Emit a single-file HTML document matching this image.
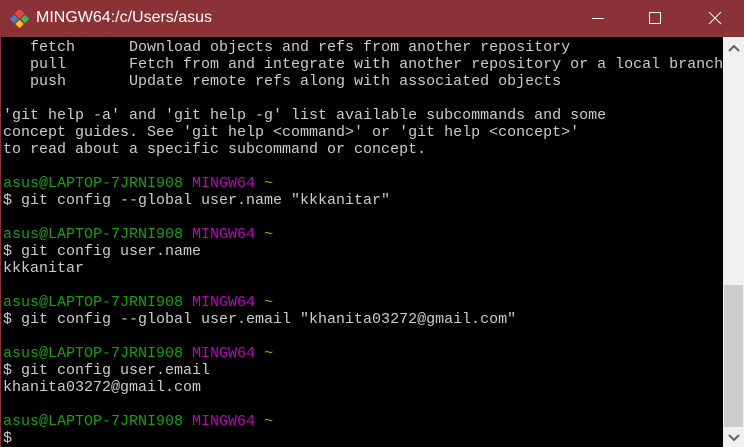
<!DOCTYPE html>
<html><head><style>
html,body{margin:0;padding:0;width:744px;height:447px;overflow:hidden;background:#000}
#t{position:absolute;left:0;top:0;width:744px;height:37px;background:#8b3236;color:#fff;font:15px "Liberation Sans",sans-serif}
#t .ttl{position:absolute;left:36px;top:9px;font-size:16px}
#term{position:absolute;left:0;top:37px;width:723px;height:410px;background:#000;border-left:1px solid #8b3236;box-sizing:border-box}
pre{margin:0;position:absolute;left:2px;top:2px;font:15px/17px "Liberation Mono",monospace;color:#cccccc;letter-spacing:0}
.g{color:#13a10e}.m{color:#c000c0}.y{color:#c19c00}
#sb{position:absolute;left:723px;top:37px;width:21px;height:410px;background:#f0f0f0}
#th{position:absolute;left:724px;top:285px;width:19px;height:142px;background:#cdcdcd}
</style></head><body>
<div id="t">
<svg style="position:absolute;left:10px;top:10px" width="20" height="18" viewBox="0 0 20 18">
<rect x="6" y="0" width="7" height="7" transform="rotate(45 9.5 3.5)" fill="#e24a3b"/>
<rect x="1" y="6" width="6" height="6" transform="rotate(45 4 9)" fill="#3d85d6"/>
<rect x="12" y="6" width="6" height="6" transform="rotate(45 15 9)" fill="#3cb54a"/>
<rect x="6.5" y="11" width="6" height="6" transform="rotate(45 9.5 14)" fill="#f6c21c"/>
</svg>
<span class="ttl">MINGW64:/c/Users/asus</span>
<svg style="position:absolute;left:590px;top:12px" width="150" height="16" viewBox="0 0 150 16">
<line x1="2" y1="6.5" x2="14" y2="6.5" stroke="#fff" stroke-width="1"/>
<rect x="59.5" y="0.5" width="11" height="11" fill="none" stroke="#fff"/>
<line x1="119" y1="0" x2="131" y2="12" stroke="#fff"/>
<line x1="131" y1="0" x2="119" y2="12" stroke="#fff"/>
</svg>
</div>
<div id="term"><pre>   fetch      Download objects and refs from another repository
   pull       Fetch from and integrate with another repository or a local branch
   push       Update remote refs along with associated objects

'git help -a' and 'git help -g' list available subcommands and some
concept guides. See 'git help &lt;command&gt;' or 'git help &lt;concept&gt;'
to read about a specific subcommand or concept.

<span class="g">asus@LAPTOP-7JRNI908</span> <span class="m">MINGW64</span> <span class="y">~</span>
$ git config --global user.name "kkkanitar"

<span class="g">asus@LAPTOP-7JRNI908</span> <span class="m">MINGW64</span> <span class="y">~</span>
$ git config user.name
kkkanitar

<span class="g">asus@LAPTOP-7JRNI908</span> <span class="m">MINGW64</span> <span class="y">~</span>
$ git config --global user.email "khanita03272@gmail.com"

<span class="g">asus@LAPTOP-7JRNI908</span> <span class="m">MINGW64</span> <span class="y">~</span>
$ git config user.email
khanita03272@gmail.com

<span class="g">asus@LAPTOP-7JRNI908</span> <span class="m">MINGW64</span> <span class="y">~</span>
$</pre></div>
<div id="sb"></div>
<div id="th"></div>
<svg style="position:absolute;left:728px;top:45px" width="12" height="8"><polyline points="1,6 6,1 11,6" fill="none" stroke="#606060" stroke-width="2"/></svg>
<svg style="position:absolute;left:728px;top:434px" width="12" height="8"><polyline points="1,1 6,6 11,1" fill="none" stroke="#606060" stroke-width="2"/></svg>
</body></html>
